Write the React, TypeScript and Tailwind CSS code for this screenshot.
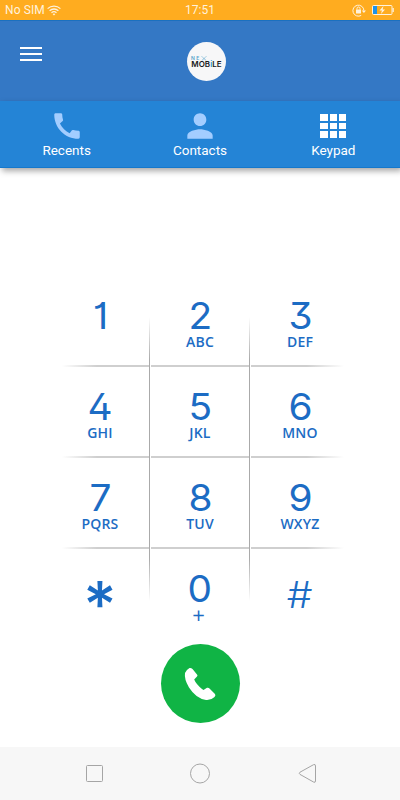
import { Fragment } from "react";
import { MdCall, MdPerson } from "react-icons/md";

type Key = { digit: string; letters?: string; digitClass?: string };

const ROWS: Key[][] = [
  [{ digit: "1" }, { digit: "2", letters: "ABC" }, { digit: "3", letters: "DEF" }],
  [
    { digit: "4", letters: "GHI" },
    { digit: "5", letters: "JKL" },
    { digit: "6", letters: "MNO" },
  ],
  [
    { digit: "7", letters: "PQRS" },
    { digit: "8", letters: "TUV" },
    { digit: "9", letters: "WXYZ" },
  ],
  [
    { digit: "*", digitClass: "translate-y-[16px] text-[64px] font-medium" },
    { digit: "0", letters: "+" },
    { digit: "#", digitClass: "translate-y-[6px] scale-x-110 text-[37px] font-light" },
  ],
];

function StatusBar() {
  return (
    <div className="flex h-5 items-center bg-[#ffac1f] text-[#fff2dc]">
      <div className="flex w-[170px] items-center pl-[5px]">
        <span className="text-[12px] leading-5 tracking-[0.1px]">No SIM</span>
        <svg className="ml-[2px]" width="14" height="11" viewBox="0 0 14 11" fill="none" stroke="currentColor" strokeWidth="1.3">
          <path d="M.6 3.6C4.2.2 9.800.2 13.400 3.6M2.600 5.700C5.100 3.400 8.900 3.400 11.400 5.700M4.500 7.700C6 6.500 8 6.500 9.500 7.700" />
          <path d="M5.600 9 7 10.500 8.400 9Q7 8.200 5.600 9Z" fill="currentColor" stroke="none" />
        </svg>
      </div>
      <div className="w-[60px] text-center text-[12px] leading-5">17:51</div>
      <div className="flex flex-1 items-center justify-end gap-[6px] pr-[6px]">
        <svg width="14" height="13" viewBox="0 0 14 13" fill="none" stroke="currentColor">
          <path d="M9.200 11.400A5.500 5.500 0 1 1 11.900 6.500" />
          <path d="M9.800 6.500h4.200l-2.100 2.400z" fill="currentColor" stroke="none" />
          <rect x="4" y="5.500" width="5" height="4" fill="currentColor" stroke="none" />
          <path d="M5 5.500V4.500a1.500 1.500 0 0 1 3 0v1" />
        </svg>
        <svg width="22" height="10" viewBox="0 0 22 10">
          <rect x=".5" y=".5" width="19.500" height="9" rx="1" fill="none" stroke="currentColor" />
          <rect x="1" y="1" width="4" height="8" fill="#1d92ea" />
          <path d="M20.500 3h1.300v4h-1.300z" fill="currentColor" />
          <path d="M11.500 1 7.500 5.600h2.400L9 9l4-4.600h-2.400z" fill="currentColor" />
        </svg>
      </div>
    </div>
  );
}

function Header() {
  return (
    <header className="grid h-[81px] grid-cols-3 border-t border-[#1b70bf] bg-[#3478c5]">
      <div className="pt-[26px] pl-[20px]">
        <div className="flex w-[22px] flex-col gap-[4px]">
          <div className="h-[2px] bg-white" />
          <div className="h-[2px] bg-white" />
          <div className="h-[2px] bg-white" />
        </div>
      </div>
      <div className="flex justify-center pt-[21px] pl-[13px]">
        <div className="flex h-[39px] w-[39px] flex-col items-center rounded-full bg-[#f7f7f8] pt-[13px] font-[Inter,sans-serif]">
          <div className="flex w-[31px] items-center text-[5px] leading-[6px] font-semibold tracking-[1.500px] text-[#55a3cb]">
            <span>NE</span>
            <svg width="6" height="5" viewBox="0 0 6 5" stroke="currentColor" strokeWidth=".8" strokeDasharray="1.200 .5">
              <path d="M.5.200 5.500 4.800M5.500.200.500 4.800" />
            </svg>
          </div>
          <div className="text-[8px] leading-[7px] font-semibold text-[#18191b]">
            MOB<span className="text-[#2497d4]">i</span>LE
          </div>
        </div>
      </div>
    </header>
  );
}

function Tabs() {
  return (
    <nav className="grid h-[67px] grid-cols-3 border-b border-[#1478cc] bg-[#2484d6] text-[13.5px] leading-4 text-white shadow-[2px_3px_6px_rgba(0,0,0,0.35)]">
      <div className="flex flex-col items-center pt-[8px]">
        <MdCall size={34} className="-mb-px text-[#a3cdff]" />
        <span>Recents</span>
      </div>
      <div className="flex flex-col items-center pt-[6px]">
        <MdPerson size={38} className="-mb-[3px] text-[#a3cdff]" />
        <span>Contacts</span>
      </div>
      <div className="flex flex-col items-center pt-[13px]">
        <div className="mb-[4px] grid h-6 w-[26px] grid-cols-3 gap-[2px]">
          {Array.from({ length: 9 }, (_, i) => (
            <div key={i} className="bg-white" />
          ))}
        </div>
        <span>Keypad</span>
      </div>
    </nav>
  );
}

function KeyCell({ digit, letters, digitClass }: Key) {
  return (
    <div className="flex h-[91px] flex-col items-center pt-[21px] text-[#1c6cc4]">
      <span
        className={`font-[Inter,sans-serif] leading-10 [font-feature-settings:'cv01','cv02','cv09'] ${digitClass ?? "scale-x-105 text-[37px] font-normal"}`}
      >
        {digit}
      </span>
      {letters && (
        <span
          className={
            letters === "+"
              ? "-mt-px mr-[3px] font-['Open_Sans',sans-serif] text-[22px] leading-[12px] font-medium"
              : "font-['Open_Sans',sans-serif] text-[14px] leading-[12px] font-semibold tracking-[0.2px]"
          }
        >
          {letters}
        </span>
      )}
    </div>
  );
}

function Keypad() {
  return (
    <div className="relative mx-auto mt-[107px] w-[300px]">
      {ROWS.map((row, i) => (
        <Fragment key={i}>
          {i > 0 && (
            <div className="-mt-px grid h-px grid-cols-[87px_98px_1fr] gap-x-[2px] pr-[6px] pl-[12px]">
              <div className="h-[2px] bg-linear-to-r from-transparent to-[#cfcfcf] to-40%" />
              <div className="h-[2px] bg-[#cfcfcf]" />
              <div className="h-[2px] bg-linear-to-l from-transparent to-[#cfcfcf] to-40%" />
            </div>
          )}
          <div className="grid grid-cols-3">
            {row.map((key) => (
              <KeyCell key={key.digit} {...key} />
            ))}
          </div>
        </Fragment>
      ))}
      {/* column dividers fade out at both ends */}
      <div className="absolute top-[42px] left-[99px] h-[284px] w-px bg-[linear-gradient(to_bottom,transparent,#aaa_15%,#aaa_85%,transparent)]" />
      <div className="absolute top-[42px] left-[199px] h-[284px] w-px bg-[linear-gradient(to_bottom,transparent,#aaa_15%,#aaa_85%,transparent)]" />
    </div>
  );
}

function NavBar() {
  return (
    <div className="flex h-[53px] items-center bg-[#f7f7f7] pl-[84px] text-[#a5a5a5]">
      <svg width="21" height="22" viewBox="0 0 21 22" fill="none" stroke="currentColor">
        <rect x="2.500" y="2.500" width="16" height="16" rx="1" />
      </svg>
      <svg className="ml-[84px]" width="22" height="22" viewBox="0 0 22 22" fill="none" stroke="currentColor">
        <circle cx="11" cy="10.500" r="9.500" />
      </svg>
      <svg className="ml-[87px]" width="20" height="22" viewBox="0 0 20 22" fill="none" stroke="currentColor" strokeLinejoin="round">
        <path d="M15.500 1.700 2 9.200Q.500 10.300 2 11.400L15.500 19Q17.500 20 17.500 18V3Q17.500 .700 15.500 1.700Z" />
      </svg>
    </div>
  );
}

export default function App() {
  return (
    <div className="flex h-[800px] w-[400px] flex-col overflow-hidden bg-white font-[Roboto,sans-serif]">
      <StatusBar />
      <Header />
      <Tabs />
      <main className="flex flex-1 flex-col items-center">
        <Keypad />
        <button className="mt-[5px] flex h-[79px] w-[79px] shrink-0 items-center justify-center rounded-full bg-[#10b445] text-white">
          <svg width="32" height="34" viewBox="0 0 32 34" fill="currentColor">
            <path d="M1 6Q2 3 5.500 1Q7 .5 8.500 2L13 7.500Q14 8.500 13 9.500L10.200 12.500Q12 17 18 22L19.500 23L23 20.800Q24.500 20.300 25.500 21.500L31 27Q32 28.500 30.500 30Q27 33.500 22 33Q12 31.500 5 20.500Q0 12 1 6Z" />
          </svg>
        </button>
      </main>
      <NavBar />
    </div>
  );
}
